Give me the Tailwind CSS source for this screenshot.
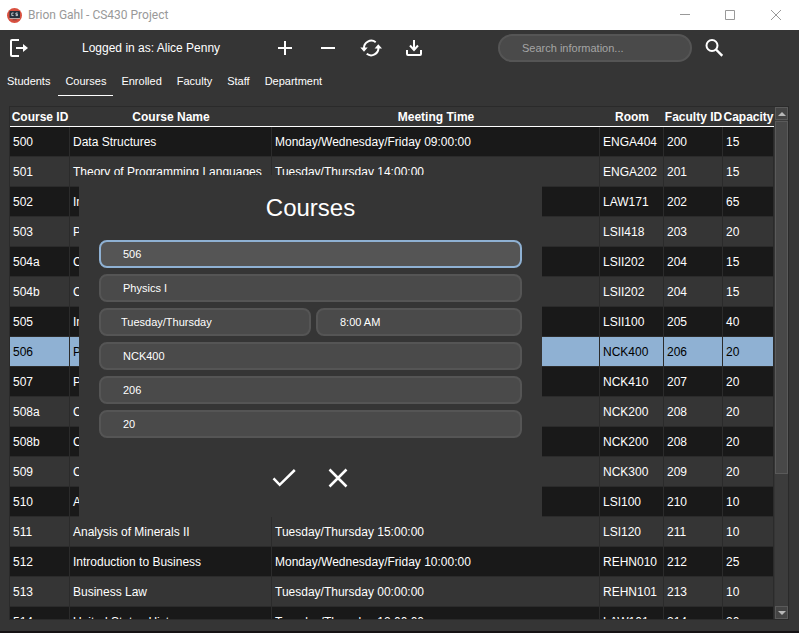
<!DOCTYPE html>
<html lang="en">
<head>
<meta charset="utf-8">
<title>Brion Gahl - CS430 Project</title>
<script src="https://cdn.jsdelivr.net/npm/@tailwindcss/browser@4"></script>
</head>
<body class="flex h-screen flex-col overflow-hidden border-b-2 border-[#151214] bg-[#353535] font-['Liberation_Sans',Arial,sans-serif] text-[12px] leading-4 text-white">

<header class="flex h-[30px] shrink-0 items-center bg-white pl-[7px] text-[#999]">
  <svg class="mr-[6px] size-[15px]" viewBox="0 0 15 15" aria-hidden="true">
    <circle cx="7.5" cy="7.5" r="7.5" fill="#d9503f"/>
    <rect x="2.5" y="3" width="10.5" height="7" rx=".8" fill="#25303a"/>
    <path d="M2.5 10h10.5v1h-10.5z" fill="#b9a8a2"/>
    <path d="M6 11h3.4l.6 1.6H5.4z" fill="#9c4a42"/>
    <path d="M6.6 5H4.8v2.6h1.8M10.7 5H8.900v1.300h1.600v1.300H8.700" fill="none" stroke="#cfd6da" stroke-width=".9"/>
  </svg>
  <h1 class="grow font-['Roboto','Open_Sans',sans-serif] text-[12px]">Brion Gahl - CS430 Project</h1>
  <button class="flex h-full w-[44px] items-center justify-center" aria-label="Minimize"><svg class="size-[10px]" viewBox="0 0 10 10" fill="none" stroke="#999"><path d="M0 4.5h10"/></svg></button>
  <button class="flex h-full w-[46px] items-center justify-center" aria-label="Maximize"><svg class="size-[10px]" viewBox="0 0 10 10" fill="none" stroke="#999"><path d="M.5.5h9v9h-9z"/></svg></button>
  <button class="flex h-full w-[46px] items-center justify-center" aria-label="Close"><svg class="size-[10px]" viewBox="0 0 10 10" fill="none" stroke="#999"><path d="M0 0l10 10M10 0L0 10"/></svg></button>
</header>

<div class="flex h-9 shrink-0 items-center">
  <button class="ml-[9px] w-[73px]" aria-label="Log out">
    <svg class="h-[18px] w-5" viewBox="0 0 20 18" fill="none" stroke="#fff" stroke-width="2"><path d="M10 1H3Q2 1 2 2v14q0 1 1 1h7"/><path d="M7 9h10"/><path d="M14 5l5 4-5 4z" fill="#fff" stroke="none"/></svg>
  </button>
  <p class="w-[189px] whitespace-nowrap">Logged in as: Alice Penny</p>
  <div class="flex grow items-center gap-[19px]">
    <button aria-label="Add"><svg class="size-6" viewBox="0 0 24 24" fill="none" stroke="#fff" stroke-width="2"><path d="M7 12h14M14 5v14"/></svg></button>
    <button aria-label="Remove"><svg class="size-6" viewBox="0 0 24 24" fill="none" stroke="#fff" stroke-width="2"><path d="M7 12h14"/></svg></button>
    <button aria-label="Refresh"><svg class="size-6 overflow-visible" viewBox="0 0 24 24" fill="none" stroke="#fff" stroke-width="2"><path d="M7 12.500A7.300 7.300 0 0 1 18.700 6.200M21.400 11.500A7.300 7.300 0 0 1 9.700 17.800"/><path d="M3.300 11.500h7.400l-3.700 4.300zM25 12.500h-7.400l3.700-4.300z" fill="#fff" stroke="none"/></svg></button>
    <button aria-label="Download"><svg class="size-6" viewBox="0 0 24 24" fill="none" stroke="#fff" stroke-width="2"><path d="M7 14v4q0 1 1 1h12q1 0 1-1v-4M14 4v10M10 9.500l4 4.500 4-4.500"/></svg></button>
  </div>
  <input type="search" aria-label="Search" placeholder="Search information..." class="h-7 w-[194px] rounded-[14px] border-2 border-[#555] bg-[#4a4a4a] pl-[22px] text-[11px] outline-none placeholder:text-[#a5a5a5]">
  <button class="mr-[76px] ml-[13px]" aria-label="Search"><svg class="size-[18px]" viewBox="0 0 18 18" fill="none" stroke="#fff" stroke-width="2"><circle cx="7" cy="6.500" r="5.500"/><path d="M11 10.500l6.300 6.300" stroke-width="2.400"/></svg></button>
</div>

<nav class="flex h-[30px] shrink-0 gap-px text-[11px] leading-[30px]">
  <a href="#" class="px-[7px]">Students</a>
  <a href="#" class="border-b border-white px-[7px]" aria-current="page">Courses</a>
  <a href="#" class="px-[7px]">Enrolled</a>
  <a href="#" class="px-[7px]">Faculty</a>
  <a href="#" class="px-[7px]">Staff</a>
  <a href="#" class="px-[7px]">Department</a>
</nav>

<main class="relative mr-[10px] ml-[9px] mt-[10px] mb-[11px] flex min-h-0 grow border border-[#2a2a2a]">
  <div class="min-w-0 grow overflow-hidden">
    <table class="w-full table-fixed border-separate border-spacing-0 whitespace-nowrap [&_td]:h-[30px] [&_td]:overflow-hidden [&_td]:border-r [&_td]:border-b [&_td]:border-[#2b2b2b] [&_td]:p-0 [&_td]:pl-[3px] [&_th]:h-5 [&_th]:border-b [&_th]:border-white [&_th]:p-0 [&_th]:text-center [&_th]:font-bold">
      <colgroup><col class="w-[60px]"><col class="w-[202px]"><col><col class="w-[64px]"><col class="w-[59px]"><col class="w-[51px]"></colgroup>
      <thead><tr><th>Course ID</th><th>Course Name</th><th>Meeting Time</th><th>Room</th><th>Faculty ID</th><th>Capacity</th></tr></thead>
      <tbody class="[&>tr:nth-child(odd)]:bg-[#191919]">
        <tr><td>500</td><td>Data Structures</td><td>Monday/Wednesday/Friday 09:00:00</td><td>ENGA404</td><td>200</td><td>15</td></tr>
        <tr><td>501</td><td>Theory of Programming Languages</td><td>Tuesday/Thursday 14:00:00</td><td>ENGA202</td><td>201</td><td>15</td></tr>
        <tr><td>502</td><td>Introduction to Law</td><td>Tuesday/Thursday 10:00:00</td><td>LAW171</td><td>202</td><td>65</td></tr>
        <tr><td>503</td><td>Plant Biology</td><td>Tuesday/Thursday 11:00:00</td><td>LSII418</td><td>203</td><td>20</td></tr>
        <tr><td>504a</td><td>Cell Biology</td><td>Tuesday/Thursday 12:00:00</td><td>LSII202</td><td>204</td><td>15</td></tr>
        <tr><td>504b</td><td>Cell Biology</td><td>Tuesday/Thursday 13:00:00</td><td>LSII202</td><td>204</td><td>15</td></tr>
        <tr><td>505</td><td>Introduction to Biology</td><td>Tuesday/Thursday 09:00:00</td><td>LSII100</td><td>205</td><td>40</td></tr>
        <tr class="bg-[#8fb1d3]! text-black" aria-selected="true"><td>506</td><td>Physics I</td><td>Tuesday/Thursday 08:00:00</td><td>NCK400</td><td>206</td><td>20</td></tr>
        <tr><td>507</td><td>Physics II</td><td>Tuesday/Thursday 10:00:00</td><td>NCK410</td><td>207</td><td>20</td></tr>
        <tr><td>508a</td><td>Chemistry I</td><td>Tuesday/Thursday 11:00:00</td><td>NCK200</td><td>208</td><td>20</td></tr>
        <tr><td>508b</td><td>Chemistry I</td><td>Tuesday/Thursday 12:00:00</td><td>NCK200</td><td>208</td><td>20</td></tr>
        <tr><td>509</td><td>Chemistry II</td><td>Tuesday/Thursday 13:00:00</td><td>NCK300</td><td>209</td><td>20</td></tr>
        <tr><td>510</td><td>Analysis of Minerals I</td><td>Tuesday/Thursday 14:00:00</td><td>LSI100</td><td>210</td><td>10</td></tr>
        <tr><td>511</td><td>Analysis of Minerals II</td><td>Tuesday/Thursday 15:00:00</td><td>LSI120</td><td>211</td><td>10</td></tr>
        <tr><td>512</td><td>Introduction to Business</td><td>Monday/Wednesday/Friday 10:00:00</td><td>REHN010</td><td>212</td><td>25</td></tr>
        <tr><td>513</td><td>Business Law</td><td>Tuesday/Thursday 00:00:00</td><td>REHN101</td><td>213</td><td>10</td></tr>
        <tr><td>514</td><td>United States History</td><td>Tuesday/Thursday 12:00:00</td><td>LAW101</td><td>214</td><td>20</td></tr>
      </tbody>
    </table>
  </div>

  <div class="ml-px flex w-[13px] shrink-0 flex-col bg-[#3c3c3c]">
    <button class="flex h-[13px] items-center justify-center border border-[#5a5a5a] bg-[#444]" aria-label="Scroll up"><svg class="h-1 w-2" viewBox="0 0 8 4"><path d="M0 4l4-4 4 4z" fill="#b8b8b8"/></svg></button>
    <div class="mt-px h-[353px] border border-[#5a5a5a] bg-[#484848]"></div>
    <button class="mt-auto flex h-[13px] items-center justify-center border border-[#5a5a5a] bg-[#444]" aria-label="Scroll down"><svg class="h-1 w-2" viewBox="0 0 8 4"><path d="M0 0h8l-4 4z" fill="#b8b8b8"/></svg></button>
  </div>

  <form class="absolute top-[68px] left-[69px] flex h-[342px] w-[463px] flex-col gap-[6px] bg-[#353535] px-5 text-[11px]" role="dialog" aria-labelledby="dialog-title">
    <h2 id="dialog-title" class="pt-[17px] pb-[10px] text-center text-[24px] leading-8">Courses</h2>
    <input aria-label="Course ID" value="506" class="h-7 shrink-0 rounded-lg border-2 border-[#8fb1d3] bg-[#555] pl-[22px] outline-none">
    <input aria-label="Course name" value="Physics I" class="h-7 shrink-0 rounded-lg border-2 border-[#555] bg-[#4a4a4a] pl-[22px] outline-none">
    <div class="flex gap-[5px]">
      <select aria-label="Days" class="h-7 w-[212px] appearance-none rounded-lg border-2 border-[#555] bg-[#4a4a4a] pl-5 outline-none"><option>Tuesday/Thursday</option><option>Monday/Wednesday/Friday</option></select>
      <select aria-label="Time" class="h-7 min-w-0 grow appearance-none rounded-lg border-2 border-[#555] bg-[#4a4a4a] pl-[22px] outline-none"><option>8:00 AM</option><option>9:00 AM</option></select>
    </div>
    <input aria-label="Room" value="NCK400" class="h-7 shrink-0 rounded-lg border-2 border-[#555] bg-[#4a4a4a] pl-[22px] outline-none">
    <input aria-label="Faculty ID" value="206" class="h-7 shrink-0 rounded-lg border-2 border-[#555] bg-[#4a4a4a] pl-[22px] outline-none">
    <input aria-label="Capacity" value="20" class="h-7 shrink-0 rounded-lg border-2 border-[#555] bg-[#4a4a4a] pl-[22px] outline-none">
    <div class="mt-[22px] flex justify-center gap-[30px]">
      <button type="button" aria-label="Confirm"><svg class="size-6" viewBox="0 0 24 24" fill="none" stroke="#fff" stroke-width="2.500"><path d="M1.500 12.300l6.200 6.500L22.800 4"/></svg></button>
      <button type="button" aria-label="Cancel"><svg class="size-6" viewBox="0 0 24 24" fill="none" stroke="#fff" stroke-width="2.500"><path d="M3.500 3.500l17 17M20.500 3.500l-17 17"/></svg></button>
    </div>
  </form>
</main>
</body>
</html>
